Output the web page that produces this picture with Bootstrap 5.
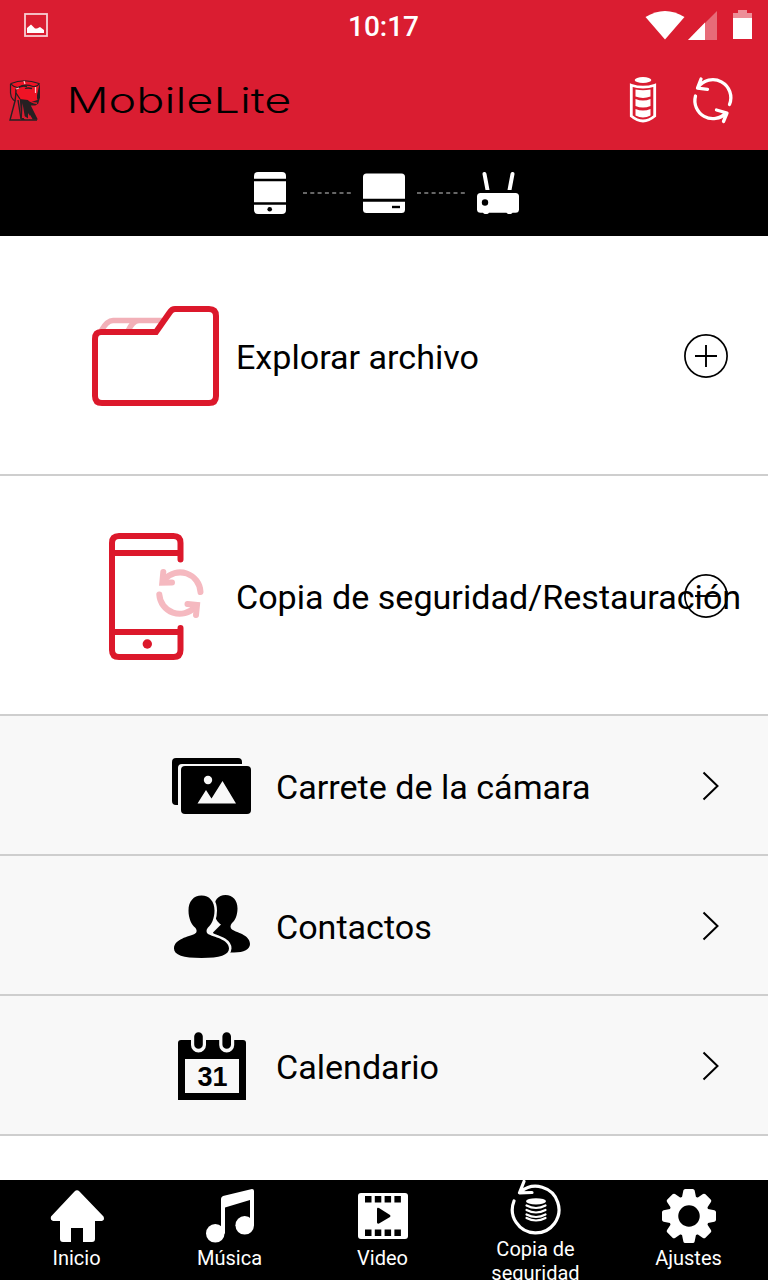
<!DOCTYPE html>
<html lang="es">
<head>
<meta charset="utf-8">
<meta name="viewport" content="width=device-width, initial-scale=1">
<title>MobileLite</title>
<link href="https://cdn.jsdelivr.net/npm/bootstrap@5.3.0/dist/css/bootstrap.min.css" rel="stylesheet">
<style>
  body { font-family: Roboto, "Noto Sans", sans-serif; color: #000; height: 1280px; overflow: hidden; }
  svg { display: block; flex: none; }
  .brand-red { background: #da1d31; }
  .status { height: 50px; padding: 0 15px 0 24px; }
  .clock { font-size: 28px; font-weight: 500; line-height: 48px; padding-top: 4px; margin-right: 10px; }
  .side { width: 120px; }
  .topbar { height: 100px; padding: 2px 34px 0 9px; }
  .linkbar { height: 86px; padding-left: 4px; }
  .entry { height: 240px; border-bottom: 2px solid #cecece; padding: 2px 40px 0 0; }
  .subentry { height: 140px; border-bottom: 2px solid #cecece; background: #f8f8f8; padding: 2px 47px 0 0; }
  .entry-icon { width: 236px; }
  .subentry-icon { width: 276px; padding-left: 172px; }
  .caption { font-size: 34.1px; line-height: 44px; width: 0; white-space: nowrap; padding-top: 2px; }
  .tabs { height: 100px; overflow: hidden; padding-right: 3px; }
  .tab-label { font-size: 20px; line-height: 24px; text-align: center; }
</style>
</head>
<body class="bg-white d-flex flex-column">
<header class="brand-red text-white">
  <div class="status d-flex align-items-center justify-content-between">
    <div class="side">
      <svg width="24" height="24" viewBox="24 13 24 24"><rect x="25" y="14" width="22" height="22" fill="none" stroke="#f7cfd3" stroke-width="1.8"/><path d="M27 33v-5l4-3.500 4 4h2l3-1.500 4 3v3z" fill="#fff"/></svg>
    </div>
    <div class="clock">10:17</div>
    <div class="side d-flex justify-content-end">
      <svg width="108" height="30" viewBox="645 10 108 30" fill="#fff"><path d="M645.500 17Q665 5 684.500 17L665 39.500z"/><path d="M717 11v29h-29z" opacity=".35"/><path d="M705 22.500V40h-17z"/><path d="M733 13h5v-3h9v3h5v5h-19z" opacity=".5"/><path d="M733 18h19v21h-19z"/></svg>
    </div>
  </div>
  <div class="topbar d-flex align-items-center">
    <svg width="32" height="42" viewBox="9 80 32 42">
      <path d="M12 84q12-6 27 0l-1 16-2 6-5-1-9-5h-5l-4-7-2-6z" fill="#f01325"/>
      <path d="M11 83.500q13-5.500 28 0-1 3-6 3-8-3-15 1-5-.5-7-4zM10.500 84v9q0 4 3 7l2 1" fill="none" stroke="#262022" stroke-width="1.200"/>
      <path d="M16 89q0 6-1 12l-5 19h27M18 100l3 19" fill="none" stroke="#262022" stroke-width="1.400"/>
      <path d="M39.800 83v15l-1.500 5.500-3 2-4.500 0 7 14h-5l-3-5v5l-8-5 3 5.500h-3.500l-1.500-21 8 1q3 3 9 4l.500-1.500-6-.500 6-2 1-4z" fill="#262022"/>
      <path d="M39.800 83l-2.800 12v4l3-1z" fill="#262022"/>
      <path d="M16 89q5-4 11-2.500M25 88.500q3-1 7 0M16 93l4 6" fill="none" stroke="#262022" stroke-width="1.300"/>
      <path d="M24 81l1 3M16 89l3-1M35.500 87v6" stroke="#ffc7cb" stroke-width="1.200"/>
      <path d="M22.500 103l2.500 15h-3zM28 113v6l4 0z" fill="#da1d31"/>
    </svg>
    <svg class="ms-4" width="230" height="42" viewBox="65 80 230 42"><text x="66.500" y="113" font-family="Inter, sans-serif" font-weight="300" font-size="35" textLength="225" lengthAdjust="spacingAndGlyphs" fill="#000">MobileLite</text></svg>
    <svg class="ms-auto" width="107" height="50" viewBox="628 76 107 50" fill="none" stroke="#fff">
      <g transform="translate(1 0)"><ellipse cx="643" cy="80" rx="8.300" ry="3" fill="#fff" stroke="none"/>
      <path d="M631.300 85.200q11.700 4 23.400 0v30.800q-11.700 10-23.400 0z" stroke-width="2.800"/>
      <path d="M635.500 89.500q7.500 1.600 15 0v7q-7.500 2.800-15 0zM635.500 99q7.500 3 15 0v7q-7.500 3-15 0zM635.500 109q7.500 3 15 0v6.500q-7.500 4-15 0z" fill="#fff" stroke="none"/></g>
      <g stroke-width="3.300" stroke-linecap="round" stroke-linejoin="round"><path d="M699 87.500A18 18 0 0 1 730.500 104.500M727 113A18 18 0 0 1 696.500 96M702 79l-3.500 9.200 10 1.200M717.500 110l10.500 3-3.500 8.500"/></g>
    </svg>
  </div>
</header>

<section class="linkbar bg-black d-flex align-items-center justify-content-center">
  <svg width="268" height="46" viewBox="252 170 268 46" fill="#fff">
    <rect x="254" y="172" width="32" height="42" rx="4"/><path d="M254 180h32M254 203.500h32" stroke="#000" stroke-width="2.400"/><circle cx="269.700" cy="209.300" r="2.300" fill="#000"/>
    <path d="M303 193h48M417 193h48" stroke="#888" stroke-width="1.700" stroke-dasharray="4 3.300"/>
    <rect x="363" y="173.500" width="42" height="39.500" rx="3.500"/><path d="M363 200.200h42" stroke="#000" stroke-width="3"/><path d="M392 207h8" stroke="#000" stroke-width="2.400"/>
    <path d="M484.500 174l3 16M512.500 174l-3 16" stroke="#fff" stroke-width="4" stroke-linecap="round"/><path d="M477 190h42v2h-42z" fill="#000"/>
    <rect x="477" y="193" width="42" height="19.800" rx="3.500"/><path d="M483 212h6q0 2-3 2t-3-2zM506.500 212h6q0 2-3 2t-3-2z"/><circle cx="485" cy="202.500" r="3.200" fill="#000"/>
  </svg>
</section>

<main class="flex-grow-1">
  <div class="entry d-flex align-items-center">
    <div class="entry-icon">
      <svg style="margin-left:92px" width="128" height="102" viewBox="92 305 128 102" fill="none" stroke="#dc182b" stroke-width="6">
        <path d="M101 331q6-10.500 12-10.500h49M128 331q5-10.500 11-10.500" stroke="#f2b0b8" stroke-width="5.500"/>
        <path d="M101 332h55l14-20q2-3 5-3h34q7 0 7 7v80q0 7-7 7H102q-7 0-7-7v-57q0-7 6-7z"/>
      </svg>
    </div>
    <div class="caption">Explorar archivo</div>
    <svg class="ms-auto" width="44" height="44" viewBox="0 0 44 44" fill="none" stroke="#000"><circle cx="22" cy="22" r="21.100" stroke-width="1.700"/><path d="M11 22h22M22 11v22" stroke-width="1.900"/></svg>
  </div>
  <div class="entry d-flex align-items-center">
    <div class="entry-icon">
      <svg style="margin-left:108px" width="98" height="128" viewBox="108 532 98 128" fill="none" stroke="#dc182b" stroke-width="6" stroke-linecap="round" stroke-linejoin="round">
        <path d="M180.500 559.500V543q0-7-7-7H119q-7 0-7 7v107q0 7 7 7h54.500q7 0 7-7v-22M112 553h68M112 632h68"/>
        <circle cx="147.300" cy="644" r="4.700" fill="#dc182b" stroke="none"/>
        <g stroke="#f5b9c0" stroke-linejoin="miter"><path d="M164.500 579.500A20.500 20.500 0 0 1 200.500 592M159.300 594.500A20.500 20.500 0 0 0 195 607"/><path d="M163.300 572l-1 10.700 9.700-.2M187.500 604l9.500 1-1 10"/></g>
      </svg>
    </div>
    <div class="caption">Copia de seguridad/Restauración</div>
    <svg class="ms-auto" width="44" height="44" viewBox="0 0 44 44" fill="none" stroke="#000"><circle cx="22" cy="22" r="21.100" stroke-width="1.700"/><path d="M11 22h22" stroke-width="1.900"/></svg>
  </div>
  <div class="subentry d-flex align-items-center">
    <div class="subentry-icon">
      <svg width="80" height="56" viewBox="172 758 80 56"><path d="M178 805h-2q-4 0-4-4v-39q0-4 4-4h62q4 0 4 4v2h-60q-4 0-4 4z"/><rect x="181" y="766" width="70" height="48" rx="4"/><circle cx="208" cy="780" r="4.200" fill="#f8f8f8"/><path d="M197.500 803.500L206 790l5.500 8.500L222.500 781 236 803.500z" fill="#f8f8f8"/></svg>
    </div>
    <div class="caption">Carrete de la cámara</div>
    <svg class="ms-auto" width="20" height="32" viewBox="0 0 20 32" fill="none" stroke="#000" stroke-width="2"><path d="M2.500 2.500L16.500 16l-14 13.500"/></svg>
  </div>
  <div class="subentry d-flex align-items-center">
    <div class="subentry-icon">
      <svg width="80" height="66" viewBox="172 893 80 66">
        <path d="M225.500 895c7.500 0 12 5.500 12 13.500 0 7-2.500 12-5.500 14.500-2 2-2 5 0 6.500 4 3 18 5 18 14.500 0 5-6 8.500-16 8.500h-15l-6-20 8-8c-3-2-7-6-7-16 0-8 4-13.500 11.500-13.500z"/>
        <path d="M201.500 895.500c8 0 13 6 13 15 0 8-3 14-6.500 17-2 2-2 5 0 6.500 5 3 21 5 21 14.500 0 6.500-9 9.500-27.500 9.500S174 955 174 948.500c0-9.500 15-12 20.500-14.500 3-1.500 2.500-4.500.500-6.500-3.500-3-6.500-9-6.500-17 0-9 5-15 13-15z" stroke="#f8f8f8" stroke-width="5"/>
        <path d="M201.500 895.500c8 0 13 6 13 15 0 8-3 14-6.500 17-2 2-2 5 0 6.500 5 3 21 5 21 14.500 0 6.500-9 9.500-27.500 9.500S174 955 174 948.500c0-9.500 15-12 20.500-14.500 3-1.500 2.500-4.500.500-6.500-3.500-3-6.500-9-6.500-17 0-9 5-15 13-15z"/>
      </svg>
    </div>
    <div class="caption">Contactos</div>
    <svg class="ms-auto" width="20" height="32" viewBox="0 0 20 32" fill="none" stroke="#000" stroke-width="2"><path d="M2.500 2.500L16.500 16l-14 13.500"/></svg>
  </div>
  <div class="subentry d-flex align-items-center">
    <div class="subentry-icon">
      <svg width="80" height="70" viewBox="172 1031 80 70">
        <path d="M178 1100v-57q0-3 3-3h62q3 0 3 3v57z"/><path d="M185 1059h54v34h-54z" fill="#f8f8f8"/>
        <path d="M198.500 1036.500v8.500M226.700 1036.500v8.500" stroke="#f8f8f8" stroke-width="15" stroke-linecap="round"/><path d="M198.500 1036.500v8M226.700 1036.500v8" stroke="#000" stroke-width="8.600" stroke-linecap="round"/>
        <text x="197.500" y="1086" font-family="Liberation Sans, sans-serif" font-weight="700" font-size="27" textLength="30">31</text>
      </svg>
    </div>
    <div class="caption">Calendario</div>
    <svg class="ms-auto" width="20" height="32" viewBox="0 0 20 32" fill="none" stroke="#000" stroke-width="2"><path d="M2.500 2.500L16.500 16l-14 13.500"/></svg>
  </div>
</main>

<nav class="tabs bg-black text-white row row-cols-5 g-0">
  <div class="col d-flex flex-column align-items-center">
    <svg width="56" height="66" viewBox="49 1180 56 66" fill="#fff"><path d="M74.500 1191.500q2.500-2.500 5 0l24 25q1.500 3.500-1.500 4.500h-7v18q0 3-3 3h-9v-14h-12v14h-8q-3 0-3-3v-18h-7q-3-1-2-4.500z"/></svg>
    <div class="tab-label">Inicio</div>
  </div>
  <div class="col d-flex flex-column align-items-center">
    <svg width="52" height="66" viewBox="204 1180 52 66" fill="#fff"><circle cx="215.300" cy="1233.300" r="9.300"/><circle cx="244.700" cy="1225.300" r="9.300"/><path d="M221 1233v-34q0-2 2-3l29-7q2 0 2 2v34h-4v-25l-25 7.500v26z"/></svg>
    <div class="tab-label">Música</div>
  </div>
  <div class="col d-flex flex-column align-items-center">
    <svg width="50" height="66" viewBox="358 1180 50 66" overflow="visible"><rect x="358" y="1193" width="50" height="46" rx="3" fill="#fff"/><path d="M365 1199.200h38M365 1232.800h38" stroke="#000" stroke-width="6.500" stroke-dasharray="6.500 3.300"/><path d="M377 1209q0-2 2-1l11 7q1 1 0 2l-11 6.500q-2 .500-2-1z"/></svg>
    <div class="tab-label">Video</div>
  </div>
  <div class="col d-flex flex-column align-items-center">
    <svg width="54" height="57" viewBox="509 1180 54 57" fill="none" stroke="#fff" stroke-linecap="round"><path d="M521 1191.500A23.300 23.300 0 1 1 514 1201M524 1181.500l-4.500 11.300 12.500-.3" stroke-width="3.200" stroke-linejoin="round"/><ellipse cx="536" cy="1201.300" rx="10" ry="3.100" fill="#fff" stroke="none"/><path d="M526.500 1205.500q9.500 5 19 0M526.500 1210q9.500 5 19 0M526.500 1214.500q9.500 5 19 0M526.500 1218q9.500 5 19 0" stroke-width="2.200"/></svg>
    <div class="tab-label">Copia de<br>seguridad</div>
  </div>
  <div class="col d-flex flex-column align-items-center">
    <svg width="56" height="66" viewBox="661 1180 56 66" fill="#fff">
      <circle cx="689" cy="1216" r="15.500" fill="none" stroke="#fff" stroke-width="9.500"/>
      <g stroke="#fff" stroke-width="4" stroke-linejoin="round">
        <path id="cog" d="M685.300 1191h7.400l1.800 9h-11zM685.300 1241h7.400l1.800-9h-11z"/>
        <use href="#cog" transform="rotate(45 689 1216)"/><use href="#cog" transform="rotate(90 689 1216)"/><use href="#cog" transform="rotate(135 689 1216)"/>
      </g>
    </svg>
    <div class="tab-label">Ajustes</div>
  </div>
</nav>
<script src="https://cdn.jsdelivr.net/npm/bootstrap@5.3.0/dist/js/bootstrap.bundle.min.js"></script>
</body>
</html>
